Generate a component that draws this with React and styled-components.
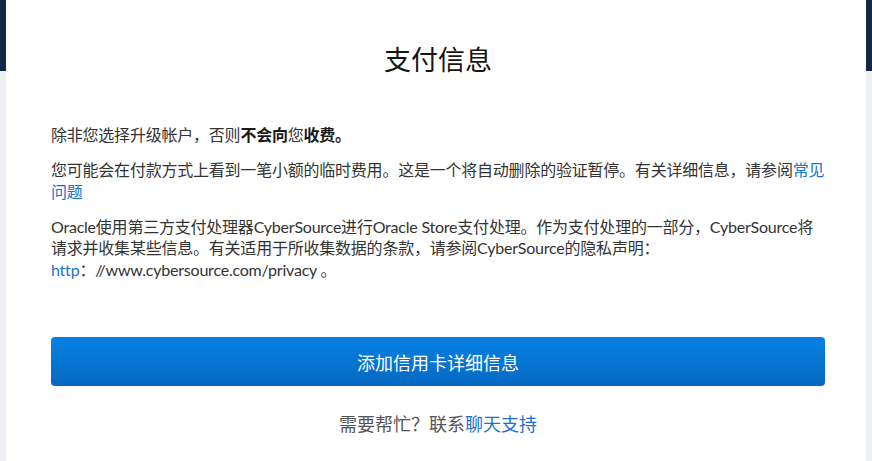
import styled, { createGlobalStyle } from "styled-components";

const GlobalStyle = createGlobalStyle`
  html, body {
    margin: 0;
    padding: 0;
    background: #eef0f4;
  }
  body {
    font-family: Lato, "Noto Sans CJK SC", sans-serif;
  }
`;

const Page = styled.div`
  width: 872px;
  height: 461px;
  box-sizing: border-box;
  padding: 0 6px;
  background: linear-gradient(to bottom, #0f2946 0, #0f2946 71px, #eef0f4 71px);
  display: flex;
  overflow: hidden;
`;

const Modal = styled.div`
  flex: 1;
  background: #fff;
  padding: 40px 41px 0 45px;
  display: flex;
  flex-direction: column;
`;

const Title = styled.h2`
  margin: 0;
  text-align: center;
  font-size: 27px;
  line-height: 40px;
  font-weight: 400;
  color: #161513;
`;

const Body = styled.div`
  margin-top: 44px;
  display: flex;
  flex-direction: column;
  gap: 13.5px;
`;

const Para = styled.p`
  margin: 0;
  font-size: 16px;
  line-height: 21.5px;
  letter-spacing: -0.22px;
  color: #333;
`;

const Strong = styled.b`
  font-weight: 700;
  color: #1a1a1a;
`;

const Link = styled.a`
  color: #1a72cf;
  text-decoration: none;
`;

const Button = styled.button`
  margin-top: 57px;
  height: 49px;
  border: none;
  border-radius: 4px;
  background: linear-gradient(to bottom, #0581e3, #0669c2);
  color: #fff;
  font-family: inherit;
  font-size: 18px;
  cursor: pointer;
`;

const Help = styled.div`
  margin-top: 26px;
  text-align: center;
  font-size: 18px;
  line-height: 24px;
  color: #555;
`;

export default function App() {
  return (
    <>
      <GlobalStyle />
      <Page>
        <Modal>
          <Title>支付信息</Title>
          <Body>
            <Para>
              除非您选择升级帐户，否则<Strong>不会向</Strong>您<Strong>收费。</Strong>
            </Para>
            <Para>
              您可能会在付款方式上看到一笔小额的临时费用。这是一个将自动删除的验证暂停。有关详细信息，请参阅<Link href="#">常见问题</Link>
            </Para>
            <Para>
              Oracle使用第三方支付处理器CyberSource进行Oracle Store支付处理。作为支付处理的一部分，CyberSource将请求并收集某些信息。有关适用于所收集数据的条款，请参阅CyberSource的隐私声明：
              <br />
              <Link href="#">http</Link>：//www.cybersource.com/privacy 。
            </Para>
          </Body>
          <Button>添加信用卡详细信息</Button>
          <Help>
            需要帮忙？联系<Link href="#">聊天支持</Link>
          </Help>
        </Modal>
      </Page>
    </>
  );
}
